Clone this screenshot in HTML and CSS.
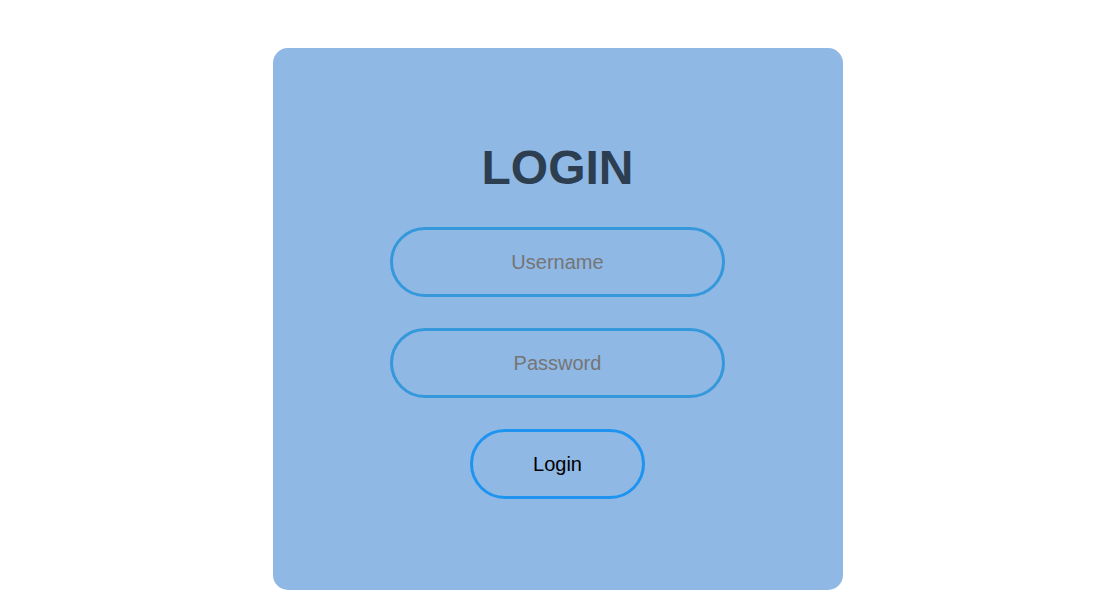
FILE: index.html
```html
<!DOCTYPE html>
<html lang="en">
<head>
	<meta charset="UTF-8">
	<title>Login</title>
	<link rel="stylesheet" href="styles.css">
</head>
<body>
	<div class="login-box">
		<h1 class="login-title">LOGIN</h1>
		<form class="login-form" action="javascript:;">
			<input class="login-input" type="text" placeholder="Username">
			<input class="login-input" type="password" placeholder="Password">
			<button class="login-btn" type="submit">Login</button>
		</form>
	</div>
</body>
</html>
```

FILE: styles.css
```css
html,body {
	margin: 0;
	padding: 0;
	background: #fff;
	font-family: "Liberation Sans", Arial, sans-serif;
}
body {
	padding-right: 3px;
}
.login-box {
	width: 570px;
	margin: 48px auto 0;
	padding: 92px 1px 91px 0;
	box-sizing: border-box;
	height: 542px;
	border-radius: 15px;
	background-color: #8fb8e5;
}
.login-title {
	margin: 0 0 32px;
	font-size: 48px;
	line-height: 55px;
	text-align: center;
	color: #2c3e50;
}
.login-form {
	display: flex;
	flex-direction: column;
	align-items: center;
	gap: 31px;
	margin: 0;
}
.login-input {
	width: 335px;
	height: 70px;
	box-sizing: border-box;
	border: 3px solid #3498db;
	border-radius: 35px;
	background: transparent;
	outline: none;
	text-align: center;
	font-family: "Liberation Sans", Arial, sans-serif;
	font-size: 20px;
	color: #333;
}
.login-input::placeholder {
	color: #757575;
}
.login-btn {
	width: 175px;
	height: 70px;
	box-sizing: border-box;
	border: 3px solid #1e94f0;
	border-radius: 35px;
	background: transparent;
	font-family: "Liberation Sans", Arial, sans-serif;
	font-size: 20px;
	color: #000;
	cursor: pointer;
}
```
